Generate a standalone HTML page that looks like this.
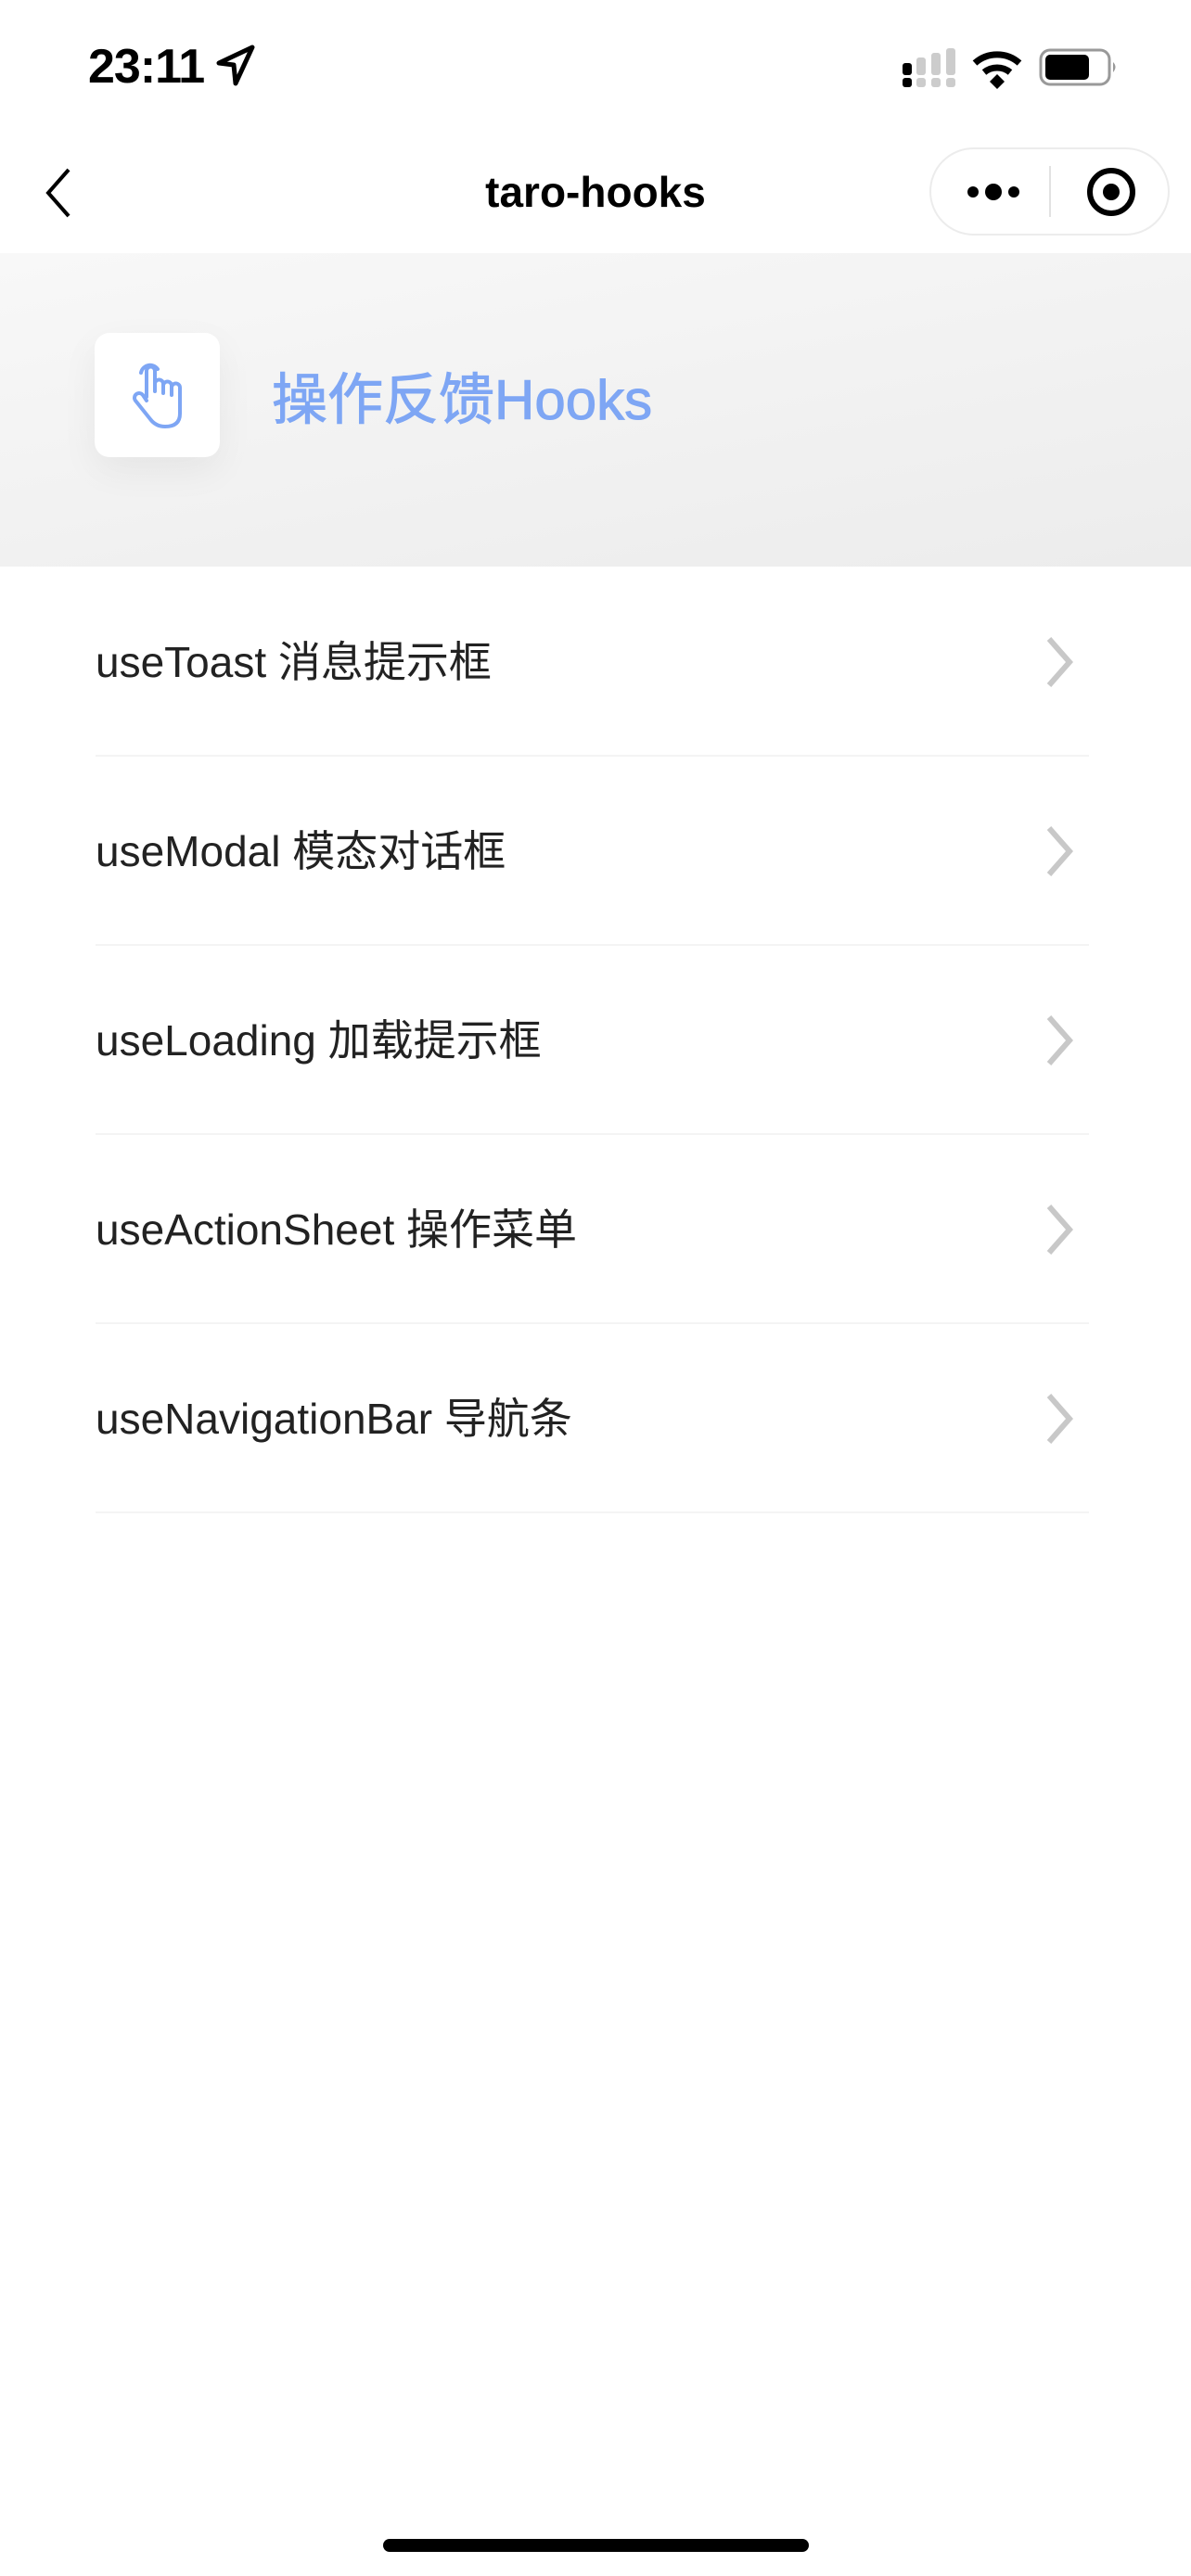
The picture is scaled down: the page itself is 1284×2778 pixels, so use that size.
<!DOCTYPE html>
<html><head><meta charset="utf-8"><style>
html,body{margin:0;padding:0;background:#fff;}
body{width:1284px;height:2778px;position:relative;overflow:hidden;font-family:"Liberation Sans","Noto Sans CJK SC",sans-serif;}
.abs{position:absolute;}
.time{left:95px;top:42px;font-size:52px;font-weight:bold;color:#000;letter-spacing:-1px;}
.title{left:0;width:1284px;top:180px;text-align:center;font-size:46px;font-weight:bold;color:#000;}
.header{left:0;top:273px;width:1284px;height:338px;background:linear-gradient(170deg,#f8f8f8,#ececec);}
.box{left:102px;top:359px;width:135px;height:134px;background:#fff;border-radius:16px;box-shadow:0 14px 40px rgba(0,0,0,0.06);}
.htext{left:293px;top:383px;font-size:60px;color:#7ea6f4;-webkit-text-stroke:1px #7ea6f4;}
.row{left:103px;width:1071px;height:204px;border-bottom:2px solid #f4f4f4;box-sizing:border-box;}
.row span{position:absolute;left:0;top:66px;font-size:46px;color:#222;}
.row svg{position:absolute;left:1020px;top:72px;}
</style></head><body>
<div class="abs time">23:11</div>
<svg class="abs" style="left:232px;top:48px" width="44" height="46" viewBox="0 0 44 46"><path d="M40 3 L4 20 L20 22 L22 42 Z" fill="none" stroke="#000" stroke-width="5" stroke-linejoin="round"/></svg>
<svg class="abs" style="left:970px;top:50px" width="240" height="46" viewBox="0 0 240 46">
<rect x="3" y="18" width="10" height="13" rx="3" fill="#000"/><rect x="3" y="34" width="10" height="10" rx="3" fill="#000"/>
<rect x="18" y="12" width="10" height="19" rx="3" fill="#ccc"/><rect x="18" y="34" width="10" height="10" rx="3" fill="#ccc"/>
<rect x="34" y="7" width="10" height="24" rx="3" fill="#ccc"/><rect x="34" y="34" width="10" height="10" rx="3" fill="#ccc"/>
<rect x="50" y="2" width="10" height="29" rx="3" fill="#ccc"/><rect x="50" y="34" width="10" height="10" rx="3" fill="#ccc"/>
<path d="M81 18 A36 36 0 0 1 129 18" fill="none" stroke="#000" stroke-width="7"/>
<path d="M91 28 A22 22 0 0 1 119 28" fill="none" stroke="#000" stroke-width="7"/>
<path d="M97 38 L105 30 L113 38 L105 46 Z" fill="#000"/>
<rect x="152" y="4" width="74" height="37" rx="10" fill="none" stroke="#999" stroke-width="3"/>
<rect x="157" y="9" width="47" height="27" rx="5" fill="#000"/>
<path d="M230 17 Q235 22 230 28 Z" fill="#999"/>
</svg>
<svg class="abs" style="left:44px;top:180px" width="40" height="56" viewBox="0 0 40 56"><path d="M30 3 L8 28 L30 53" fill="none" stroke="#000" stroke-width="4"/></svg>
<div class="abs title">taro-hooks</div>
<div class="abs" style="left:1002px;top:159px;width:259px;height:95px;border:2px solid #ececec;border-radius:48px;box-sizing:border-box;"></div>
<div class="abs" style="left:1131px;top:179px;width:2px;height:55px;background:#e2e2e2"></div>
<svg class="abs" style="left:1040px;top:177px" width="190" height="60" viewBox="0 0 190 60">
<circle cx="9" cy="30" r="6" fill="#000"/><circle cx="31" cy="30" r="9" fill="#000"/><circle cx="53" cy="30" r="6" fill="#000"/>
<circle cx="158" cy="30" r="23" fill="none" stroke="#000" stroke-width="6"/><circle cx="158" cy="30" r="9" fill="#000"/>
</svg>
<div class="abs header"></div>
<div class="abs box"></div>
<svg class="abs" style="left:138px;top:388px" width="64" height="76" viewBox="0 0 64 76" fill="none" stroke="#7ea6f4" stroke-width="4" stroke-linecap="round" stroke-linejoin="round">
<path d="M14 14 A10 10 0 0 1 32 10"/>
<path d="M20 40 V12 a4.5 4.5 0 0 1 9 0 V34 M29 26 a4.5 4.5 0 0 1 9 0 V36 M38 28 a4.5 4.5 0 0 1 9 0 V38 M47 30 a4.5 4.5 0 0 1 9 0 V58 Q56 72 40 72 Q30 72 24 64 L8 44 a5 5 0 0 1 8 -6 L20 44"/>
</svg>
<div class="abs htext">操作反馈Hooks</div>
<div class="abs row" style="top:612px"><span>useToast 消息提示框</span><svg width="40" height="60" viewBox="0 0 40 60"><path d="M8 5 L30 30 L8 55" fill="none" stroke="#c8c8c8" stroke-width="6"/></svg></div>
<div class="abs row" style="top:816px"><span>useModal 模态对话框</span><svg width="40" height="60" viewBox="0 0 40 60"><path d="M8 5 L30 30 L8 55" fill="none" stroke="#c8c8c8" stroke-width="6"/></svg></div>
<div class="abs row" style="top:1020px"><span>useLoading 加载提示框</span><svg width="40" height="60" viewBox="0 0 40 60"><path d="M8 5 L30 30 L8 55" fill="none" stroke="#c8c8c8" stroke-width="6"/></svg></div>
<div class="abs row" style="top:1224px"><span>useActionSheet 操作菜单</span><svg width="40" height="60" viewBox="0 0 40 60"><path d="M8 5 L30 30 L8 55" fill="none" stroke="#c8c8c8" stroke-width="6"/></svg></div>
<div class="abs row" style="top:1428px"><span>useNavigationBar 导航条</span><svg width="40" height="60" viewBox="0 0 40 60"><path d="M8 5 L30 30 L8 55" fill="none" stroke="#c8c8c8" stroke-width="6"/></svg></div>
<div class="abs" style="left:413px;top:2738px;width:459px;height:14px;border-radius:7px;background:#000"></div>
</body></html>
